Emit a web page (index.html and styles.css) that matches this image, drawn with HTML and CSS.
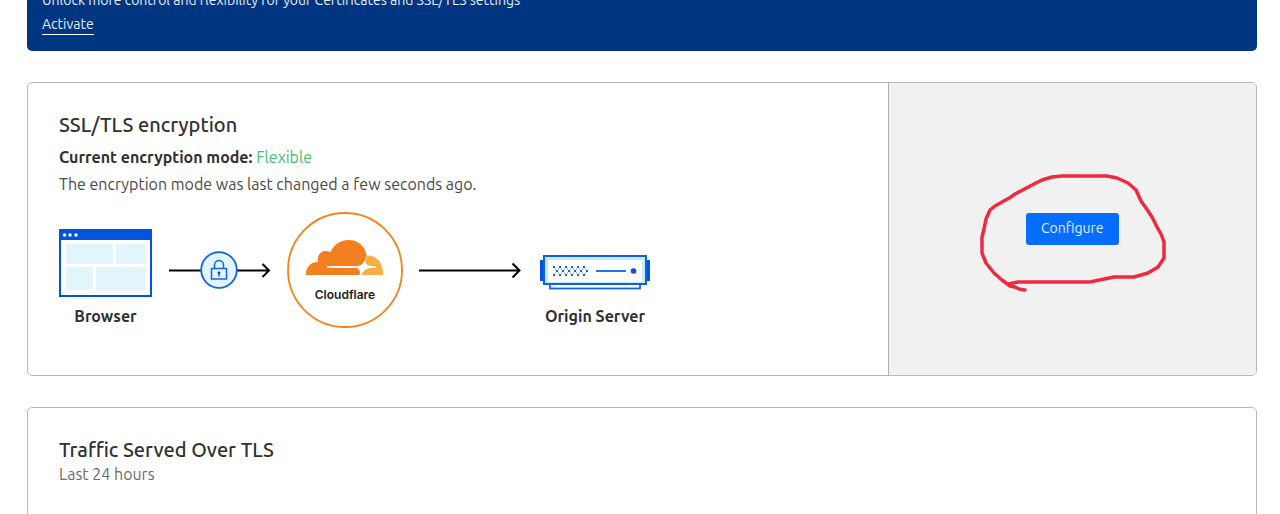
FILE: index.html
```html
<!DOCTYPE html>
<html lang="en">
<head>
<meta charset="utf-8">
<title>SSL/TLS overview</title>
<link rel="stylesheet" href="styles.css">
</head>
<body>
<main class="page">
  <section class="banner">
    <p class="banner-text">Unlock more control and flexibility for your Certificates and SSL/TLS settings</p>
    <a class="banner-link" href="#activate">Activate</a>
  </section>

  <section class="card split">
    <div class="card-body">
      <h2 class="title">SSL/TLS encryption</h2>
      <p class="mode"><strong>Current encryption mode:</strong> <span class="mode-value">Flexible</span></p>
      <p class="note">The encryption mode was last changed a few seconds ago.</p>
      <div class="diagram">
        <figure class="node">
          <svg width="93" height="68" viewBox="0 0 93 68" aria-hidden="true">
            <rect x="1" y="1" width="91" height="66" fill="#fff" stroke="#0055dc" stroke-width="2"/>
            <path d="M0 0H93V11H0Z" fill="#0055dc"/>
            <g fill="#fff"><circle cx="5.500" cy="6" r="1.700"/><circle cx="11" cy="6" r="1.700"/><circle cx="17" cy="6" r="1.700"/></g>
            <path d="M7 15H54V35H7ZM57 15H87V35H57ZM7 38H34V61H7ZM37 38H87V61H37Z" fill="#e2f5fa"/>
          </svg>
          <figcaption>Browser</figcaption>
        </figure>
        <svg class="link" width="103" height="38" viewBox="0 0 103 38" fill="none" aria-hidden="true">
          <path d="M1 19.500H101M94.500 13L101 19.500L94.500 26" stroke="#000" stroke-width="2"/>
          <circle cx="51" cy="19" r="17.800" fill="#e2f5fa" stroke="#1464e8" stroke-width="1.800"/>
          <path d="M43.500 17.500H58.500V28H43.500ZM46.500 17.500V14A4.500 4.500 0 0 1 55.500 14V17.500" stroke="#1464e8" stroke-width="1.500"/>
          <path d="M51 21V25.500" stroke="#0045c0" stroke-width="1.300"/><circle cx="51" cy="21.800" r="1.400" fill="#0045c0"/>
        </svg>
        <svg width="116" height="116" viewBox="0 0 116 116" role="img" aria-label="Cloudflare">
          <circle cx="58" cy="58" r="57" fill="#fff" stroke="#f6821f" stroke-width="1.800"/>
          <path d="M19 63C18.500 55 24 50 31 50C29 42 36 36.500 43.500 40C47 32 54 28 61.500 28C71 28 78 34 79.500 43C79.500 49 76 54 69 54.200L40 54.200V55.600L69 56C73 56.500 73.500 60 72.500 63Z" fill="#f38020"/>
          <path d="M79.500 43.500C89 43 96.500 50 96 63H74C75.500 58.500 78 57 82 56L89 55.600V54.600L83 54.200C79 53 77.500 51 79 48Z" fill="#faae40"/>
          <path d="M79.500 43.500C79.500 46 79 47.500 78 50C79 53 81 54 89 54.400V55.600C80 56 77 57.500 74.500 63H72.800C73.500 58.500 73 56 69 55.800H40V54.200H70C75 54 77.500 50 79.500 43.500Z" fill="#fff"/>
          <text class="brand" x="58" y="87" text-anchor="middle">Cloudflare</text>
        </svg>
        <svg class="link" width="105" height="38" viewBox="0 0 105 38" fill="none" aria-hidden="true">
          <path d="M0 19.500H101M93.500 12.500L100.500 19.500L93.500 26.500" stroke="#000" stroke-width="2"/>
        </svg>
        <figure class="node server">
          <svg width="110" height="35" viewBox="0 0 110 35" aria-hidden="true">
            <path d="M0 5H5V26H0ZM105 5H110V26H105Z" fill="#0055dc"/>
            <rect x="10" y="28" width="90" height="5.500" fill="#fff" stroke="#1464e8" stroke-width="1.800"/>
            <rect x="4" y="1" width="102" height="28" fill="#c5ebf5" stroke="#0f60e5" stroke-width="2"/>
            <path d="M8 5H102V27H8Z" fill="#fff"/>
            <g stroke="#0f60e5" stroke-width="2">
              <path stroke-dasharray="2 4" d="M13 12H47M13 20H47"/>
              <path stroke-dasharray="2 4" d="M16 16H49"/>
              <path stroke-dasharray="1 5" d="M15 14H48M18 14H48M15 18H48M18 18H48" opacity=".4"/>
            </g>
            <path d="M56 16H86" stroke="#0f60e5" stroke-width="1.800"/>
            <circle cx="93.500" cy="16" r="2.800" fill="#0055dc"/>
          </svg>
          <figcaption>Origin Server</figcaption>
        </figure>
      </div>
    </div>
    <div class="card-side">
      <div class="action">
        <button class="button" type="button">Configure</button>
        <svg class="scribble" width="200" height="140" viewBox="0 0 200 140" fill="none" aria-hidden="true">
          <path d="M51 125L45 124L41 122L36 121L28 115L20 108L12 98L8 88V72L10 64L12 54L16 45L21 41L37 32L41 29L60 19L68 15L78 12L88 11H133L143 13L154 18L162 25L167 36L172 43L178 52L183 62L187 69L190 77V93L184 102L174 108L160 112H140L116 117H44L34 119" stroke="#ee2a40" stroke-width="3.500" stroke-linecap="round" stroke-linejoin="round"/>
        </svg>
      </div>
    </div>
  </section>

  <section class="card">
    <div class="card-body">
      <h2 class="title traffic">Traffic Served Over TLS</h2>
      <p class="period">Last 24 hours</p>
    </div>
  </section>
</main>
</body>
</html>
```
FILE: styles.css
```css
* { box-sizing: border-box; }
body {
  margin: 0;
  background: #fff;
  color: #313131;
  font: 16px/24px Ubuntu, "Noto Sans", sans-serif;
}
h2, p, figure { margin: 0; }
.page {
  display: flex;
  flex-direction: column;
  gap: 31px;
  padding: 0 23px 0 27px;
}
.banner {
  padding: 0 15px 13px;
  border-radius: 0 0 5px 5px;
  background: #003681;
  color: #e6edf7;
  font-size: 14px;
}
.banner-text { margin-top: -12px; }
.banner-link {
  display: inline-block;
  margin-bottom: 3px;
  border-bottom: 1px solid #fff;
  color: inherit;
  line-height: 20px;
  text-decoration: none;
}
.card {
  border: 1px solid #b9b9b9;
  border-radius: 5px;
  overflow: hidden;
}
.split {
  display: grid;
  grid-template-columns: 7fr 3fr;
}
.card-body { padding: 30px 31px 47px; }
.title {
  margin-bottom: 8px;
  font-size: 20px;
  font-weight: 500;
}
.traffic { margin-bottom: 0; }
.mode { margin-bottom: 3px; }
.mode strong { font-weight: 600; }
.mode-value { color: #46bd70; }
.note { color: #4a4a4a; }
.period { color: #6b6b6b; }
.diagram {
  display: flex;
  align-items: flex-end;
  gap: 16px;
  margin-top: 16px;
}
.diagram svg { display: block; flex: none; }
.diagram .link { align-self: center; }
.node {
  display: flex;
  flex-direction: column;
  align-items: center;
  gap: 7px;
  font-weight: 600;
}
.server { gap: 14px; }
.brand {
  fill: #222;
  font: 600 12px Inter, sans-serif;
}
.card-side {
  display: flex;
  align-items: center;
  justify-content: center;
  border-left: 1px solid #b0b0b0;
  background: #f1f1f1;
}
.action { position: relative; }
.button {
  display: block;
  padding: 3px 15px 5px;
  border: 0;
  border-radius: 3px;
  background: #056dff;
  color: #e2eeff;
  font: 14px/24px Ubuntu, "Noto Sans", sans-serif;
}
.scribble {
  position: absolute;
  top: -48px;
  left: -52px;
  pointer-events: none;
}
```
